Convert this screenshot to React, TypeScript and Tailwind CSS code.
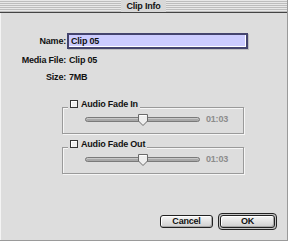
import React from "react";

const font = { fontFamily: '"Liberation Sans", Arial, sans-serif' };

function Thumb() {
  return (
    <svg width="11" height="12" viewBox="0 0 11 12" className="absolute left-[52px] top-[-4px]">
      <path d="M0.5 0.5 H9.5 V7 L5 11.5 L0.5 7 Z" fill="#eeeeee" stroke="#6a6a6a" strokeWidth="1" />
      <path d="M1.5 1.5 H8.5" stroke="#ffffff" strokeWidth="1" />
    </svg>
  );
}

function GroupBox({ label }: { label: string }) {
  return (
    <div className="relative ml-[62px] w-[182px] h-[27px] border border-[#9a9a9a] shadow-[inset_1px_1px_0_#f6f6f6,1px_1px_0_#f6f6f6] flex items-center pb-[3px]">
      <div className="absolute left-[5px] top-[-10px] h-[12px] flex items-center gap-[3px] bg-[#dddddd] px-[2px]">
        <div className="w-[8px] h-[8px] border border-[#333333] bg-[#eeeeee] shadow-[inset_1px_1px_0_#ffffff]" />
        <span className="text-[9px] font-bold tracking-[-0.2px] text-[#111111] leading-[12px]">{label}</span>
      </div>
      <div className="ml-[22px] flex items-center">
        <div className="relative w-[115px] h-[5px] rounded-full border border-[#7a7a7a] bg-[#a8a8a8] shadow-[inset_0_1px_0_#c8c8c8]">
          <Thumb />
        </div>
        <span className="ml-[6px] text-[9px] font-bold tracking-[-0.2px] text-[#8c8c8c] leading-[12px]">01:03</span>
      </div>
    </div>
  );
}

export default function App() {
  return (
    <div
      style={font}
      className="w-[288px] h-[241px] bg-[#dddddd] flex flex-col border-r border-b border-[#9a9a9a] overflow-hidden"
    >
      <div className="h-[12px] shrink-0 flex items-center justify-center bg-[repeating-linear-gradient(to_bottom,#e8e8e8_0px,#e8e8e8_1px,#bdbdbd_1px,#bdbdbd_2px)]">
        <span className="bg-[#d8d8d8] px-[5px] h-[12px] leading-[12px] text-[9px] font-bold tracking-[-0.2px] text-[#111111]">
          Clip Info
        </span>
      </div>
      <div className="h-[1px] shrink-0 bg-[#444444]" />
      <div className="flex-1 flex flex-col shadow-[inset_1px_0_0_#f4f4f4]">
        <div className="pt-[20px] flex flex-col gap-[5px] text-[9px] font-bold tracking-[-0.2px] text-[#111111]">
          <div className="flex items-center h-[16px]">
            <span className="w-[66px] text-right leading-[12px]">Name:</span>
            <div className="ml-[1px] w-[181px] h-[16px] border-2 border-[#44446e] bg-[#ccccff] shadow-[inset_-1px_-1px_0_#ffffff,1px_1px_0_#bdbdbd] flex items-center pl-[2px] leading-[12px]">
              Clip 05
            </div>
          </div>
          <div className="flex items-center h-[12px]">
            <span className="w-[66px] text-right leading-[12px]">Media File:</span>
            <span className="ml-[3px] leading-[12px]">Clip 05</span>
          </div>
          <div className="flex items-center h-[12px]">
            <span className="w-[66px] text-right leading-[12px]">Size:</span>
            <span className="ml-[3px] leading-[12px]">7MB</span>
          </div>
        </div>
        <div className="mt-[24px]">
          <GroupBox label="Audio Fade In" />
        </div>
        <div className="mt-[13px]">
          <GroupBox label="Audio Fade Out" />
        </div>
        <div className="mt-auto mb-[10px] mr-[10px] flex items-center justify-end gap-[5px]">
          <button className="w-[53px] h-[13px] rounded-[3px] border border-[#222222] bg-[linear-gradient(to_bottom,#f6f6f6,#cfcfcf)] shadow-[inset_1px_1px_0_#ffffff,inset_-1px_-1px_0_#a8a8a8] text-[9px] font-bold tracking-[-0.2px] leading-[11px] text-[#111111]">
            Cancel
          </button>
          <div className="w-[59px] h-[17px] rounded-[4px] border border-[#222222] bg-[#c4c4c4] p-[1px] flex">
            <button className="flex-1 rounded-[3px] border border-[#222222] bg-[linear-gradient(to_bottom,#f6f6f6,#cfcfcf)] shadow-[inset_1px_1px_0_#ffffff,inset_-1px_-1px_0_#a8a8a8] text-[9px] font-bold tracking-[-0.2px] leading-[11px] text-[#111111]">
              OK
            </button>
          </div>
        </div>
      </div>
    </div>
  );
}
